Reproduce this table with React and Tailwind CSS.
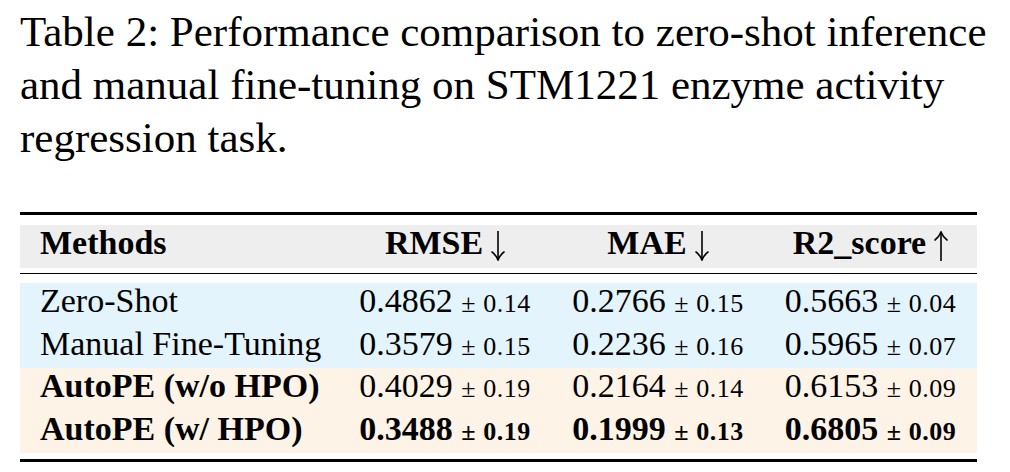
import React from 'react';

const rows = [
  { name: 'Zero-Shot', bg: 'bg-[#e3f4fd]', boldName: false, boldVals: false, vals: [['0.4862', '0.14'], ['0.2766', '0.15'], ['0.5663', '0.04']] },
  { name: 'Manual Fine-Tuning', bg: 'bg-[#e3f4fd]', boldName: false, boldVals: false, vals: [['0.3579', '0.15'], ['0.2236', '0.16'], ['0.5965', '0.07']] },
  { name: 'AutoPE (w/o HPO)', bg: 'bg-[#fdf3e6]', boldName: true, boldVals: false, vals: [['0.4029', '0.19'], ['0.2164', '0.14'], ['0.6153', '0.09']] },
  { name: 'AutoPE (w/ HPO)', bg: 'bg-[#fdf3e6]', boldName: true, boldVals: true, vals: [['0.3488', '0.19'], ['0.1999', '0.13'], ['0.6805', '0.09']] },
];

// thin math-style arrow, taller than the text glyph
function Arrow({ up }) {
  return (
    <svg width="14" height="30" viewBox="0 0 14 30" className="inline-block align-[-7px] ml-[8px]" fill="none" stroke="black" strokeWidth="1.6" strokeLinecap="round">
      {up ? (
        <>
          <path d="M7 2 L7 30" />
          <path d="M1 9 Q5 6 7 1 Q9 6 13 9" />
        </>
      ) : (
        <>
          <path d="M7 0 L7 28" />
          <path d="M1 21 Q5 24 7 29 Q9 24 13 21" />
        </>
      )}
    </svg>
  );
}

function Value({ v, bold }) {
  return (
    <div className={`text-center whitespace-nowrap ${bold ? 'font-bold' : ''}`}>
      {v[0]} <span className="text-[26px] tracking-[0.5px]">± {v[1]}</span>
    </div>
  );
}

export default function App() {
  return (
    <div className="w-[1010px] h-[472px] bg-white text-black overflow-hidden" style={{ fontFamily: '"Liberation Serif", "Times New Roman", serif' }}>
      {/* Caption */}
      <p className="pt-[5px] px-[20px] text-[43px] leading-[53px] whitespace-nowrap">
        Table 2: Performance comparison to zero-shot inference<br />
        and manual fine-tuning on STM1221 enzyme activity<br />
        regression task.
      </p>

      {/* Table */}
      <div className="ml-[20px] w-[957px] mt-[48px] text-[34px]">
        <div className="h-[2.5px] bg-black" />
        <div className="mt-[10.5px] h-[43px] bg-[#eeeeee] grid grid-cols-[318px_214px_212px_213px] items-start leading-[36px] font-bold">
          <div className="pl-[20px]">Methods</div>
          <div className="text-center whitespace-nowrap">RMSE<Arrow /></div>
          <div className="text-center whitespace-nowrap">MAE<Arrow /></div>
          <div className="text-center whitespace-nowrap">R2_score<Arrow up /></div>
        </div>
        <div className="mt-[4.5px] h-[1.5px] bg-black" />
        <div className="mt-[9px]">
          {rows.map((r) => (
            <div key={r.name} className={`h-[42.5px] grid grid-cols-[318px_214px_212px_213px] items-start leading-[35px] ${r.bg}`}>
              <div className={`pl-[20px] whitespace-nowrap ${r.boldName ? 'font-bold' : ''}`}>{r.name}</div>
              {r.vals.map((v, i) => (
                <Value key={i} v={v} bold={r.boldVals} />
              ))}
            </div>
          ))}
        </div>
        <div className="mt-[6px] h-[3px] bg-black" />
      </div>
    </div>
  );
}
